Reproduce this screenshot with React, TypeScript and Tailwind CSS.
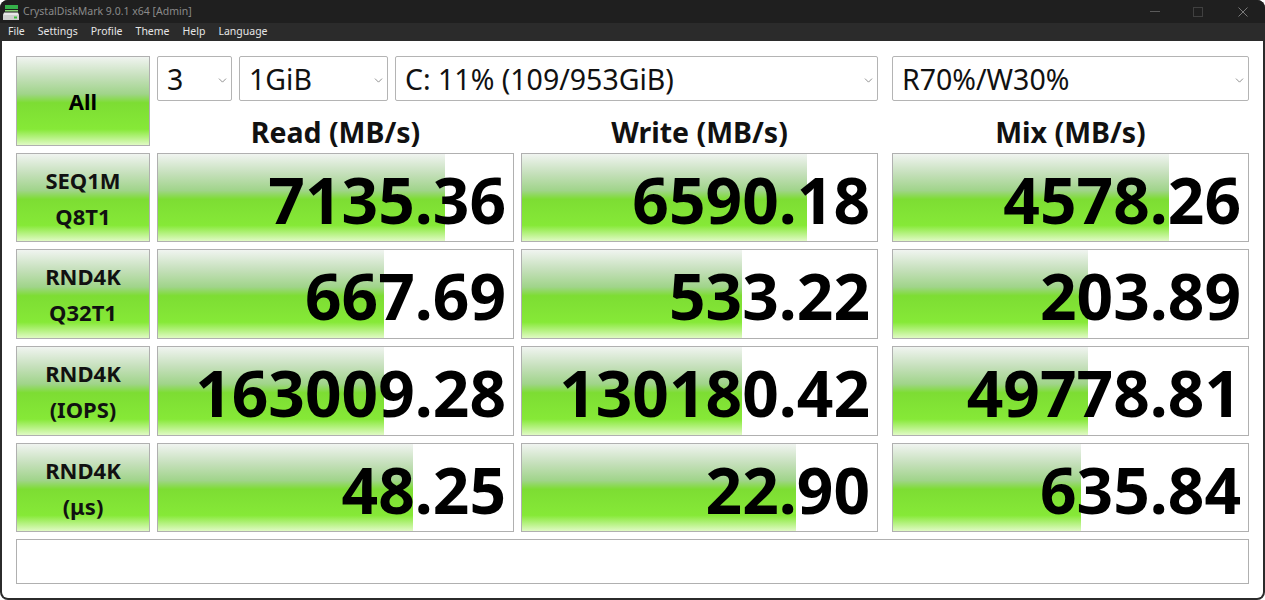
import { ChevronDown } from "lucide-react";

const FONT = "font-['Noto_Sans','Open_Sans',sans-serif]";
const GRADIENT =
  "bg-[linear-gradient(to_bottom,#f0f4f0_0%,#c6e0bc_22%,#a0d48a_42%,#7ddd33_52%,#86e937_82%,#e0fac4_100%)]";

const menu = ["File", "Settings", "Profile", "Theme", "Help", "Language"];

const rows = [
  {
    top: "SEQ1M",
    bottom: "Q8T1",
    height: "h-[89px]",
    cells: [
      { value: "7135.36", bar: 287 },
      { value: "6590.18", bar: 285 },
      { value: "4578.26", bar: 276 },
    ],
  },
  {
    top: "RND4K",
    bottom: "Q32T1",
    height: "h-[90px]",
    cells: [
      { value: "667.69", bar: 226 },
      { value: "533.22", bar: 220 },
      { value: "203.89", bar: 195 },
    ],
  },
  {
    top: "RND4K",
    bottom: "(IOPS)",
    height: "h-[90px]",
    cells: [
      { value: "163009.28", bar: 226 },
      { value: "130180.42", bar: 220 },
      { value: "49778.81", bar: 195 },
    ],
  },
  {
    top: "RND4K",
    bottom: "(μs)",
    height: "h-[89px]",
    cells: [
      { value: "48.25", bar: 255 },
      { value: "22.90", bar: 274 },
      { value: "635.84", bar: 188 },
    ],
  },
];

function Select({ label, className }: { label: string; className: string }) {
  return (
    <div
      className={`flex h-[45px] items-center justify-between rounded-[2px] border border-[#b4b4b4] bg-white pl-[9px] pr-[2px] pt-[1px] text-[28.5px] text-[#111] ${className}`}
    >
      <span>{label}</span>
      <ChevronDown className="mt-[2px] h-[13px] w-[13px] text-[#777]" strokeWidth={1.5} />
    </div>
  );
}

function Cell({ value, bar, className }: { value: string; bar: number; className: string }) {
  return (
    <div className={`relative h-full border border-[#b0b0b0] bg-white ${className}`}>
      <div className={`h-full ${GRADIENT}`} style={{ width: bar }} />
      <div className="absolute inset-0 flex items-center justify-end pr-[7px] pt-[4px] text-[64px] font-bold leading-none text-black">
        {value}
      </div>
    </div>
  );
}

function DiskIcon() {
  return (
    <svg width="16" height="16" viewBox="0 0 16 16" className="ml-[3px]">
      <path d="M2 1h13v4H2z" fill="#35b04a" />
      <path d="M2 6h13v1.5H2z" fill="#8fd47a" />
      <path d="M1 8.5h14l1 2.5H0z" fill="#e8e8e8" />
      <path d="M0 11h16v5H0z" fill="#cfcfcf" />
      <path d="M11 12.5h3v2h-3z" fill="#3fbf3f" />
    </svg>
  );
}

export default function App() {
  return (
    <div className={`h-[600px] w-[1265px] overflow-hidden rounded-[8px] bg-[#2b2b2b] ${FONT}`}>
      <div className="flex h-[23px] items-center bg-[#1f1f1f]">
        <DiskIcon />
        <span className="ml-[4px] text-[10.5px] text-[#8a8a8a]">CrystalDiskMark 9.0.1 x64 [Admin]</span>
        <div className="ml-auto flex items-center pr-[17px]">
          <span className="h-px w-[10px] bg-[#5a5a5a]" />
          <span className="ml-[33px] h-[10px] w-[10px] border border-[#404040]" />
          <svg width="10" height="10" viewBox="0 0 10 10" stroke="#7a7a7a" strokeWidth="1" fill="none" className="ml-[35px]">
            <path d="M.5.5l9 9M9.5.5l-9 9" />
          </svg>
        </div>
      </div>
      <div className="flex h-[18px] items-center gap-[13px] pl-[8px] text-[10.5px] text-[#e6e6e6]">
        {menu.map((item) => (
          <span key={item}>{item}</span>
        ))}
      </div>
      <div className="ml-[2px] mr-[2px] h-[557px] rounded-b-[6px] bg-white pl-[14px] pt-[15px]">
        <div className="flex gap-[7px]">
          <div
            className={`flex h-[90px] w-[134px] items-center justify-center border border-[#b0b0b0] text-[22px] font-bold text-black ${GRADIENT}`}
          >
            All
          </div>
          <div>
            <div className="flex">
              <Select label="3" className="w-[75px]" />
              <Select label="1GiB" className="ml-[7px] w-[149px]" />
              <Select label="C: 11% (109/953GiB)" className="ml-[7px] w-[483px]" />
              <Select label="R70%/W30%" className="ml-[14px] w-[357px]" />
            </div>
            <div className="flex h-[45px] items-center pt-[17px] text-[28.5px] font-bold leading-[28px] text-[#111]">
              <span className="w-[364px] pr-[7px] text-center">Read (MB/s)</span>
              <span className="w-[371px] pr-[14px] text-center">Write (MB/s)</span>
              <span className="w-[357px] text-center">Mix (MB/s)</span>
            </div>
          </div>
        </div>
        <div className="mt-[7px] flex flex-col gap-[7px]">
          {rows.map((row, i) => (
            <div key={i} className={`flex ${row.height}`}>
              <div
                className={`flex w-[134px] flex-col items-center justify-center gap-[6px] border border-[#b0b0b0] text-[22px] font-bold leading-[30px] text-[#111] ${GRADIENT}`}
              >
                <span>{row.top}</span>
                <span>{row.bottom}</span>
              </div>
              <Cell value={row.cells[0].value} bar={row.cells[0].bar} className="ml-[7px] w-[357px]" />
              <Cell value={row.cells[1].value} bar={row.cells[1].bar} className="ml-[7px] w-[357px]" />
              <Cell value={row.cells[2].value} bar={row.cells[2].bar} className="ml-[14px] w-[357px]" />
            </div>
          ))}
        </div>
        <div className="mt-[7px] h-[45px] w-[1233px] border border-[#b0b0b0]" />
      </div>
    </div>
  );
}
